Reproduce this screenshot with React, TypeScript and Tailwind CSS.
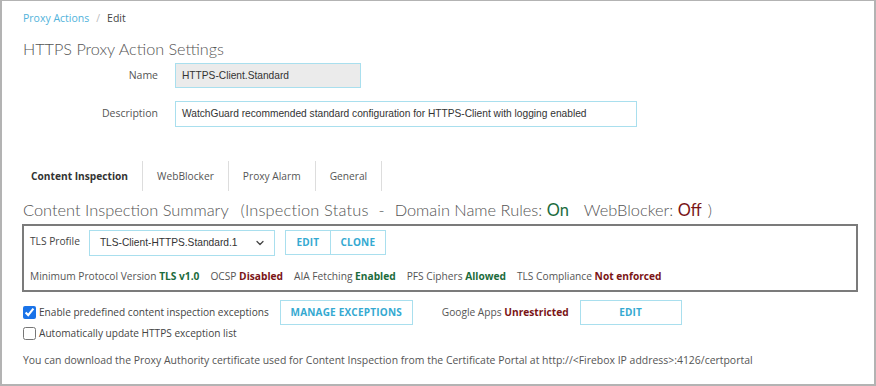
import { ChevronDown } from 'lucide-react';

const sans = "font-['Open_Sans',sans-serif]";
const head = "font-['Lato',sans-serif] font-light";
const arial = "font-['Liberation_Sans',Arial,sans-serif]";

const tabs = ['Content Inspection', 'WebBlocker', 'Proxy Alarm', 'General'];

function Btn({ label, className }: { label: string; className?: string }) {
  return (
    <button
      className={`h-[25px] border border-[#a9dfee] bg-white text-[10px] font-bold tracking-[0.02em] text-[#35a9d1] ${className ?? ''}`}
    >
      {label}
    </button>
  );
}

export default function App() {
  return (
    <div className={`w-[876px] h-[386px] bg-white border-2 border-t border-[#b3b3b3] text-[#444] ${sans}`}>
      {/* breadcrumb */}
      <div className="pl-[21px] pt-[9px] text-[10.5px] leading-[16px]">
        <span className="text-[#52b3db]">Proxy Actions</span>
        <span className="mx-[7px] text-[#bbb]">/</span>
        <span className="text-[#444]">Edit</span>
      </div>

      <h1 className={`pl-[21px] mt-[13px] text-[16.2px] leading-[20px] text-[#555] ${head}`}>
        HTTPS Proxy Action Settings
      </h1>

      {/* form rows */}
      <div className="mt-[4px] flex flex-col gap-[13px]">
        <div className="flex items-center">
          <label className="w-[156px] text-right text-[10.5px] text-[#555]">Name</label>
          <div
            className={`ml-[17px] h-[25px] w-[186px] border border-[#a9dfee] bg-[#ebebeb] px-[6px] flex items-center text-[10.2px] text-[#333] ${arial}`}
          >
            HTTPS-Client.Standard
          </div>
        </div>
        <div className="flex items-center">
          <label className="w-[156px] text-right text-[10.5px] text-[#555]">Description</label>
          <div
            className={`ml-[17px] h-[26px] w-[462px] border border-[#a9dfee] bg-white px-[6px] flex items-center text-[10.2px] text-[#333] ${arial}`}
          >
            WatchGuard recommended standard configuration for HTTPS-Client with logging enabled
          </div>
        </div>
      </div>

      {/* tabs */}
      <div className="mt-[34px] ml-[15px] flex h-[30px] items-center">
        {tabs.map((t, i) => (
          <div key={t} className="flex h-full items-center">
            <span className={`px-[14px] pt-[1px] text-[10.2px] ${i === 0 ? 'font-bold text-[#333]' : 'text-[#555]'}`}>{t}</span>
            <span className="h-full w-px bg-[#ddd]" />
          </div>
        ))}
      </div>

      {/* summary heading */}
      <div className={`pl-[21px] mt-[9px] text-[16.4px] leading-[20px] text-[#555] ${head}`}>
        Content Inspection Summary<span className="ml-[12px] tracking-[0.01em]">(Inspection Status</span>
        <span className="mx-[10px]">-</span>Domain Name Rules: <span className="font-normal text-[#1c6b3c]">On</span>
        <span className="ml-[15px]">WebBlocker: </span>
        <span className="font-normal text-[#7a1416]">Off</span>
        <span className="ml-[6px]">)</span>
      </div>

      {/* TLS box */}
      <div className="ml-[20px] mt-[4px] w-[836px] border-2 border-[#7b7b7b] px-[6px] pt-[4px] pb-[6px]">
        <div className="flex items-start">
          <span className="pt-[4px] text-[10.2px] text-[#444]">TLS Profile</span>
          <div
            className={`ml-[9px] flex h-[26px] w-[186px] items-center justify-between border border-[#a9dfee] pl-[10px] pr-[8px] text-[10.2px] text-[#333] ${arial}`}
          >
            TLS-Client-HTTPS.Standard.1
            <ChevronDown className="h-[12px] w-[12px] text-[#444]" strokeWidth={2.5} />
          </div>
          <div className="ml-[10px] flex">
            <Btn label="EDIT" className="w-[46px]" />
            <Btn label="CLONE" className="-ml-px w-[56px]" />
          </div>
        </div>
        <div className="mt-[12px] text-[10.2px] leading-[16px] text-[#555]">
          Minimum Protocol Version <b className="text-[#1c6b3c]">TLS v1.0</b>
          <span className="ml-[11px]">OCSP </span>
          <b className="text-[#7a1416]">Disabled</b>
          <span className="ml-[11px]">AIA Fetching </span>
          <b className="text-[#1c6b3c]">Enabled</b>
          <span className="ml-[11px]">PFS Ciphers </span>
          <b className="text-[#1c6b3c]">Allowed</b>
          <span className="ml-[11px]">TLS Compliance </span>
          <b className="text-[#7a1416]">Not enforced</b>
        </div>
      </div>

      {/* exceptions */}
      <div className="ml-[21px] mt-[8px] flex items-center">
        <label className="flex items-center gap-[3px] text-[10.1px] text-[#444]">
          <input type="checkbox" defaultChecked className="m-0 h-[13px] w-[13px] accent-[#1a73e8]" />
          Enable predefined content inspection exceptions
        </label>
        <Btn label="MANAGE EXCEPTIONS" className="ml-[11px] w-[133px]" />
        <span className="ml-[29px] text-[10.2px] text-[#555]">
          Google Apps <b className="text-[#7a1416]">Unrestricted</b>
        </span>
        <Btn label="EDIT" className="ml-[11px] w-[102px]" />
      </div>
      <label className="ml-[21px] mt-[1px] flex items-center gap-[3px] text-[10.1px] text-[#444]">
        <input type="checkbox" className="m-0 h-[13px] w-[13px]" />
        Automatically update HTTPS exception list
      </label>

      <p className="ml-[21px] mt-[12px] text-[10.45px] text-[#555]">
        You can download the Proxy Authority certificate used for Content Inspection from the Certificate Portal at
        http://&lt;Firebox IP address&gt;:4126/certportal
      </p>
    </div>
  );
}
